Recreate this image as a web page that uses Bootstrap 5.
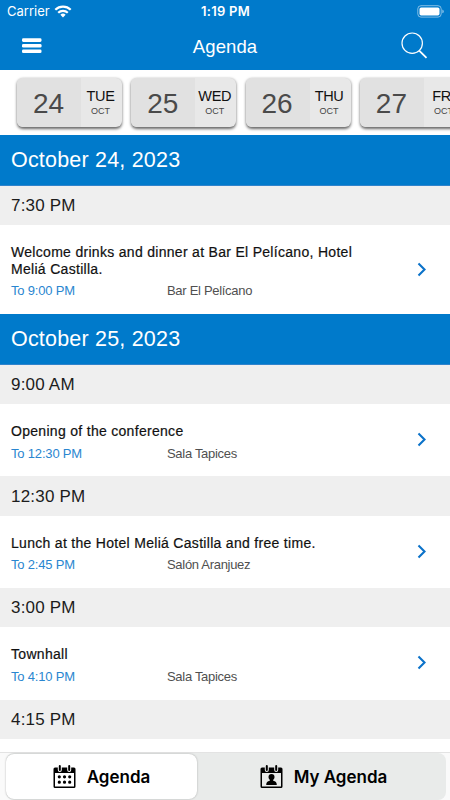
<!DOCTYPE html>
<html lang="en">
<head>
<meta charset="utf-8">
<meta name="viewport" content="width=device-width, initial-scale=1">
<title>Agenda</title>
<link href="https://cdn.jsdelivr.net/npm/bootstrap@5.3.0/dist/css/bootstrap.min.css" rel="stylesheet">
<style>
:root{--brand:#007acb}
body{font-family:"Liberation Sans",Arial,sans-serif;color:#111;height:800px;line-height:1}
.brand-bg{background:var(--brand)}
.status-bar{height:22px;font-family:Inter,"Liberation Sans",sans-serif;font-size:13px;padding:1px 6px 0 7px}
.status-bar .side{width:100px}
.carrier{letter-spacing:0}
.clock{font-weight:600;letter-spacing:.25px}
.title-bar{height:48px;padding:0 22px 0 22px}
.title-bar h1{font-size:18.5px;letter-spacing:.1px;margin-top:2px}
.title-bar .side{width:60px}
.day-strip{height:65px;padding:8px 0 0 17px;gap:9.3px}
.day{width:105px;height:49px;border-radius:6px;background:#e8e8e8;box-shadow:0 1.5px 3px rgba(0,0,0,.6)}
.day-num{width:64px;background:#e1e1e1;color:#4a4a4a;font-size:28px;padding:2px 1px 0 0}
.day-label{padding-right:2px}
.day-name{font-size:14.5px;letter-spacing:-.3px}
.day-month{font-size:9px;color:#444}
.date-head{height:51px;font-size:21.5px;letter-spacing:.2px;padding:1px 11px 0;border-bottom:1px solid #2f83cc}
.time-head{height:39.2px;font-size:17px;letter-spacing:.2px;padding:0 11px;background:#efefef;color:#1c1c1c}
.event{height:72.4px;padding:19px 23px 0 11px}
.event.tall{height:88.7px}
.event-title{font-size:14px;line-height:16.6px;letter-spacing:.3px;-webkit-text-stroke:.2px #111;width:350px}
.event-meta{font-size:13px;letter-spacing:-.18px;margin-top:7px}
.event-until{width:156px;color:#2a86d0}
.event-place{color:#505050;letter-spacing:-.3px}
.tabs{height:48px;background:#fafafa;border-top:1px solid #e3e3e3;padding:0 4px 0 6px}
.tab-track{background:#e9ebea;border-radius:8px}
.tab-item{font-family:Inter,"Liberation Sans",sans-serif;font-weight:600;font-size:17px;color:#000;gap:11px}
.tab-item.active{width:191px;background:#fff;border-radius:8px;margin:1px 0;box-shadow:0 0 2px rgba(0,0,0,.3)}
.tab-label{padding-top:2px}
</style>
</head>
<body class="d-flex flex-column overflow-hidden bg-white">
<header class="brand-bg text-white flex-shrink-0">
  <div class="status-bar d-flex align-items-center justify-content-between">
    <div class="side d-flex align-items-center gap-1"><span class="carrier">Carrier</span>
      <svg width="18" height="13" viewBox="0 0 18 13" fill="none" stroke="#fff" stroke-width="2.2"><path d="M1.3 4.8a11 11 0 0 1 15.4 0M4.2 7.800a6.800 6.800 0 0 1 9.600 0"/><path d="M9 12.400 6.400 9.800a3.800 3.800 0 0 1 5.200 0z" fill="#fff" stroke="none"/></svg>
    </div>
    <span class="clock">1:19 PM</span>
    <div class="side text-end"><svg width="27" height="13" viewBox="0 0 27 13"><rect x=".8" y=".7" width="23.4" height="11.4" rx="3.2" fill="none" stroke="#fff" stroke-opacity=".5"/><rect x="2.5" y="2.4" width="20" height="8" rx="1.7" fill="#fff"/><path d="M25.4 4.5q1.3.5 1.3 1.9t-1.3 1.9z" fill="#fff" fill-opacity=".6"/></svg></div>
  </div>
  <div class="title-bar d-flex align-items-center justify-content-between">
    <div class="side"><svg width="20" height="16" viewBox="0 0 20 16" fill="#fff"><rect y=".3" width="19.5" height="3.6" rx="1.3"/><rect y="5.9" width="19.5" height="3.6" rx="1.3"/><rect y="11.5" width="19.5" height="3.6" rx="1.3"/></svg></div>
    <h1 class="mb-0 fw-normal">Agenda</h1>
    <div class="side text-end"><svg width="27" height="29" viewBox="0 1 27 29" fill="none" stroke="#fff"><circle cx="11.2" cy="12.2" r="10.2" stroke-width="1.2"/><path d="m18.2 19.600 7.300 7.200" stroke-width="1.8"/></svg></div>
  </div>
</header>
<nav class="day-strip d-flex flex-shrink-0 overflow-hidden">
  <div class="day d-flex flex-shrink-0 overflow-hidden"><div class="day-num d-flex align-items-center justify-content-center">24</div><div class="day-label flex-fill d-flex flex-column align-items-center justify-content-center gap-1"><span class="day-name">TUE</span><span class="day-month">OCT</span></div></div>
  <div class="day d-flex flex-shrink-0 overflow-hidden"><div class="day-num d-flex align-items-center justify-content-center">25</div><div class="day-label flex-fill d-flex flex-column align-items-center justify-content-center gap-1"><span class="day-name">WED</span><span class="day-month">OCT</span></div></div>
  <div class="day d-flex flex-shrink-0 overflow-hidden"><div class="day-num d-flex align-items-center justify-content-center">26</div><div class="day-label flex-fill d-flex flex-column align-items-center justify-content-center gap-1"><span class="day-name">THU</span><span class="day-month">OCT</span></div></div>
  <div class="day d-flex flex-shrink-0 overflow-hidden"><div class="day-num d-flex align-items-center justify-content-center">27</div><div class="day-label flex-fill d-flex flex-column align-items-center justify-content-center gap-1"><span class="day-name">FRI</span><span class="day-month">OCT</span></div></div>
</nav>
<main class="flex-fill overflow-hidden">
  <div class="date-head brand-bg text-white d-flex align-items-center">October 24, 2023</div>
  <div class="time-head d-flex align-items-center">7:30 PM</div>
  <div class="event tall d-flex justify-content-between">
    <div><div class="event-title">Welcome drinks and dinner at Bar El Pelícano, Hotel Meliá Castilla.</div><div class="event-meta d-flex"><span class="event-until">To 9:00 PM</span><span class="event-place">Bar El Pelícano</span></div></div>
    <svg class="mt-3" width="10" height="18" viewBox="0 -1 10 18" fill="none" stroke="#0b72c9" stroke-width="2.1"><path d="m1.500 2.500 6 6-6 6"/></svg>
  </div>
  <div class="date-head brand-bg text-white d-flex align-items-center">October 25, 2023</div>
  <div class="time-head d-flex align-items-center">9:00 AM</div>
  <div class="event d-flex justify-content-between">
    <div><div class="event-title">Opening of the conference</div><div class="event-meta d-flex"><span class="event-until">To 12:30 PM</span><span class="event-place">Sala Tapices</span></div></div>
    <svg class="mt-2" width="10" height="16" viewBox="0 0 10 16" fill="none" stroke="#0b72c9" stroke-width="2.1"><path d="m1.500 2.500 6 6-6 6"/></svg>
  </div>
  <div class="time-head d-flex align-items-center">12:30 PM</div>
  <div class="event d-flex justify-content-between">
    <div><div class="event-title">Lunch at the Hotel Meliá Castilla and free time.</div><div class="event-meta d-flex"><span class="event-until">To 2:45 PM</span><span class="event-place">Salón Aranjuez</span></div></div>
    <svg class="mt-2" width="10" height="16" viewBox="0 0 10 16" fill="none" stroke="#0b72c9" stroke-width="2.1"><path d="m1.500 2.500 6 6-6 6"/></svg>
  </div>
  <div class="time-head d-flex align-items-center">3:00 PM</div>
  <div class="event d-flex justify-content-between">
    <div><div class="event-title">Townhall</div><div class="event-meta d-flex"><span class="event-until">To 4:10 PM</span><span class="event-place">Sala Tapices</span></div></div>
    <svg class="mt-2" width="10" height="16" viewBox="0 0 10 16" fill="none" stroke="#0b72c9" stroke-width="2.1"><path d="m1.500 2.500 6 6-6 6"/></svg>
  </div>
  <div class="time-head d-flex align-items-center">4:15 PM</div>
</main>
<footer class="tabs flex-shrink-0">
  <div class="tab-track d-flex h-100">
    <div class="tab-item active d-flex align-items-center justify-content-center">
      <svg width="23" height="24" viewBox="0 0 23 24"><path fill-rule="evenodd" d="M2 2.500h19a1.500 1.500 0 0 1 1.500 1.500v17.500a1.500 1.500 0 0 1-1.500 1.500h-19a1.500 1.500 0 0 1-1.500-1.500v-17.500a1.500 1.500 0 0 1 1.500-1.500zM2 8v13.500h19V8z"/><path d="M6.800 1v4M16.200 1v4" stroke="#fff" stroke-width="4" stroke-linecap="round"/><path d="M6.800 1v4M16.200 1v4" stroke="#000" stroke-width="2" stroke-linecap="round"/><path d="M6.300 11.800h.01M11.500 11.800h.01M16.700 11.800h.01M6.300 17.200h.01M11.500 17.200h.01M16.700 17.200h.01" stroke="#000" stroke-width="3.200" stroke-linecap="round"/></svg>
      <span class="tab-label">Agenda</span>
    </div>
    <div class="tab-item flex-fill d-flex align-items-center justify-content-center ps-1">
      <svg width="23" height="24" viewBox="0 0 23 24"><path fill-rule="evenodd" d="M2 2.500h19a1.500 1.500 0 0 1 1.500 1.500v17.500a1.500 1.500 0 0 1-1.500 1.500h-19a1.500 1.500 0 0 1-1.500-1.500v-17.500a1.500 1.500 0 0 1 1.500-1.500zM2 8v13.500h19V8z"/><path d="M6.800 1v4M16.200 1v4" stroke="#e9ebea" stroke-width="4" stroke-linecap="round"/><path d="M6.800 1v4M16.200 1v4" stroke="#000" stroke-width="2" stroke-linecap="round"/><circle cx="11.500" cy="12" r="3"/><path d="M6.200 20q0-3.600 3.600-4.200v-2h3.400v2q3.600.6 3.600 4.200z"/></svg>
      <span class="tab-label">My Agenda</span>
    </div>
  </div>
</footer>
<script src="https://cdn.jsdelivr.net/npm/bootstrap@5.3.0/dist/js/bootstrap.bundle.min.js"></script>
</body>
</html>
